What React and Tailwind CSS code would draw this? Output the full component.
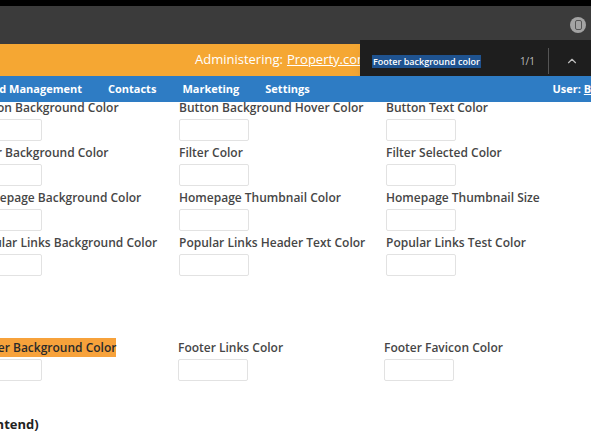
import { ChevronUp } from "lucide-react";

const rows = [
  ["Button Background Color", "Button Background Hover Color", "Button Text Color"],
  ["Filter Background Color", "Filter Color", "Filter Selected Color"],
  ["Homepage Background Color", "Homepage Thumbnail Color", "Homepage Thumbnail Size"],
  ["Popular Links Background Color", "Popular Links Header Text Color", "Popular Links Test Color"],
];

const Field = ({ label, hit }) => (
  <div className="flex flex-col">
    <div className="h-[16px] leading-[16px] whitespace-nowrap">
      <span className={hit ? "bg-[#f7a23b] text-[#2a2a2a] py-[1px]" : ""}>{label}</span>
    </div>
    <div className="mt-[3px] w-[70px] h-[22px] border border-[#e2e2e2] rounded-[2px] bg-white" />
  </div>
);

export default function App() {
  return (
    <div className="relative w-[591px] h-[443px] overflow-hidden bg-white font-['Open_Sans',sans-serif]">
      <div className="h-[6px] bg-black" />
      <div className="h-[38px] bg-[#3b3b3b] flex items-center justify-end pr-[5px]">
        <div className="w-[16px] h-[16px] rounded-full bg-[#a3a3a3] flex items-center justify-center">
          <div className="w-[7px] h-[10px] rounded-[2px] border-[1.5px] border-[#555]" />
        </div>
      </div>

      <div className="h-[32px] bg-[#f5a733] flex items-center pl-[195px] text-white text-[13px] whitespace-nowrap">
        Administering: <span className="ml-[4px] underline">Property.com</span>
      </div>

      <nav className="relative z-10 h-[26px] bg-[#2e7cc4] flex items-center text-white text-[11px] font-bold whitespace-nowrap overflow-hidden">
        <div className="flex gap-[26px] ml-[-27px]">
          <span>Brand Management</span>
          <span>Contacts</span>
          <span>Marketing</span>
          <span>Settings</span>
        </div>
        <span className="ml-auto mr-[-14px]">
          User: <span className="underline">Bob</span>
        </span>
      </nav>

      <div className="ml-[-28px] mt-[-2px] text-[12px] font-semibold text-[#464646]">
        <div className="flex flex-col gap-[4px]">
          {rows.map((r, i) => (
            <div key={i} className="grid grid-cols-[207px_207px_207px]">
              {r.map(l => <Field key={l} label={l} />)}
            </div>
          ))}
        </div>
        <div className="mt-[64px] grid grid-cols-[206px_206px_206px]">
          <Field label="Footer Background Color" hit />
          <Field label="Footer Links Color" />
          <Field label="Footer Favicon Color" />
        </div>
        <div className="mt-[34px] ml-[-46px] text-[13px] font-bold text-[#222] whitespace-nowrap">Colors (Frontend)</div>
      </div>

      <div className="absolute top-[40px] left-[360px] right-0 h-[42px] bg-[#1e1e1e] rounded-bl-[6px] shadow-lg flex items-center text-[9px]">
        <span className="ml-[12px] bg-[#1f5390] text-white px-[1px] leading-[13px] font-semibold">Footer background color</span>
        <span className="ml-auto text-[#bdbdbd] text-[10px]">1/1</span>
        <div className="ml-[13px] w-px h-[26px] bg-[#555]" />
        <ChevronUp className="ml-[16px] mr-[12px] text-[#bdbdbd]" size={14} strokeWidth={2} />
      </div>
    </div>
  );
}
